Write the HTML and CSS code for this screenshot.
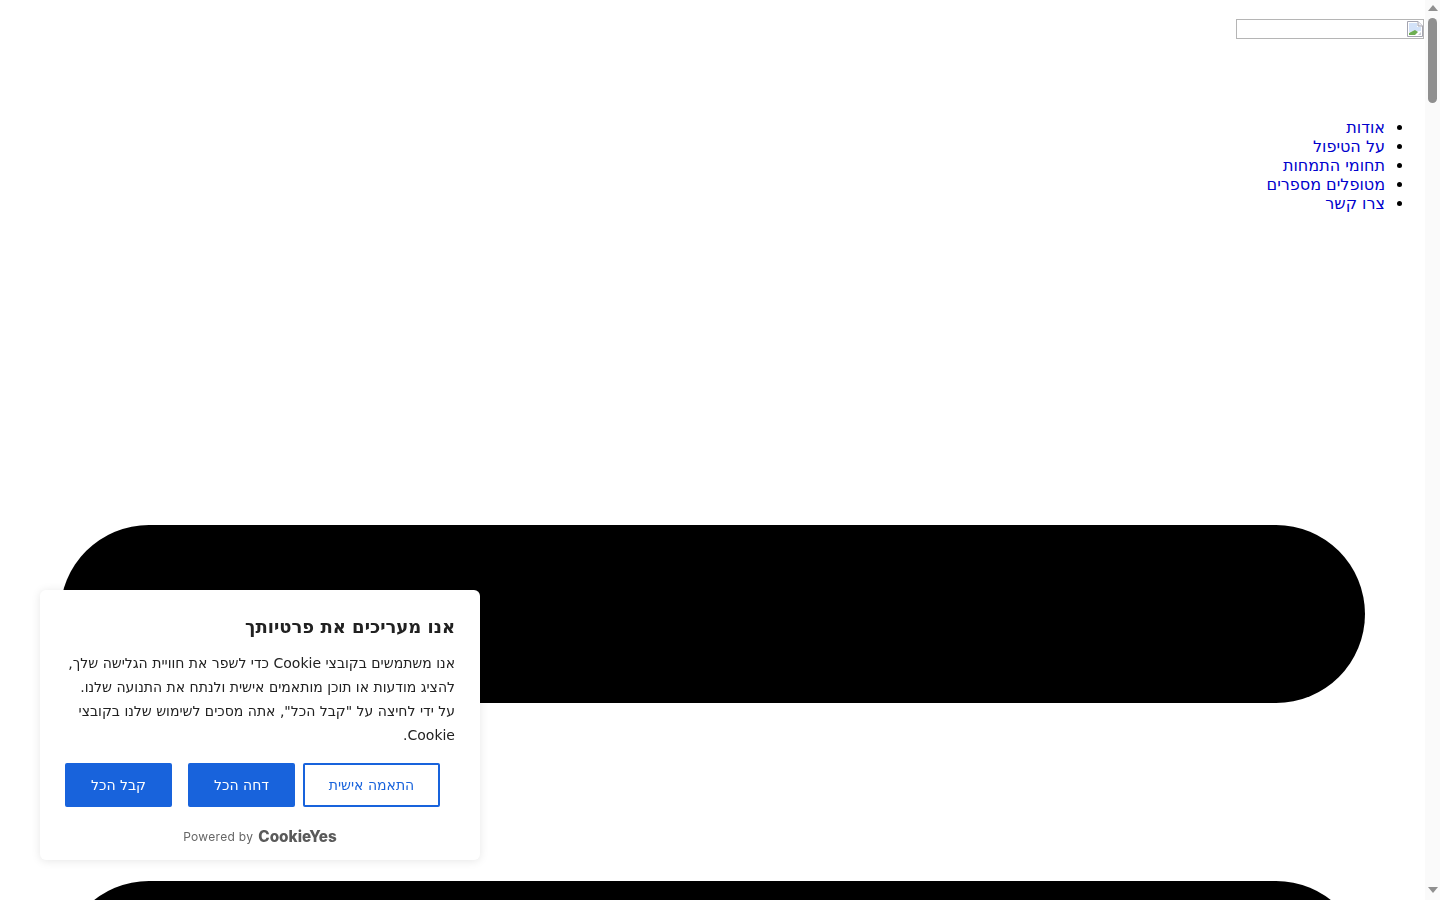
FILE: index.html
```html
<!DOCTYPE html>
<html lang="he" dir="rtl">

<head>
    <meta charset="utf-8">
    <title>אודות</title>
    <link rel="stylesheet" href="styles.css">
</head>

<body>
    <header class="site-header">
        <div class="logo-box">
            <svg class="broken-img" width="16" height="16" viewBox="0 0 16 16">
                <path d="M.5.500h10.500l4.500 4.500v10.500h-15z" fill="#fff" stroke="#a4a4b0" />
                <path d="M11 .5v4.500h4.500" fill="#eeeef3" stroke="#a4a4b0" />
                <path d="M2 2h8v4h4v4l-12 1z" fill="#d3e2f8" />
                <path d="M2 14v-2l6-3 3 2-3 3z" fill="#6cae52" />
                <path d="M11 14l3-3v3z" fill="#c8cdd6" />
            </svg>
        </div>
    </header>

    <nav>
        <ul class="main-menu">
            <li><a href="#">אודות</a></li>
            <li><a href="#">על הטיפול</a></li>
            <li><a href="#">תחומי התמחות</a></li>
            <li><a href="#">מטופלים מספרים</a></li>
            <li><a href="#">צרו קשר</a></li>
        </ul>
    </nav>

    <main class="sections">
        <div class="pill"></div>
        <div class="pill"></div>
    </main>

    <!-- COOKIE BANNER -->
    <div class="cookie-banner">
        <p class="cookie-title">אנו מעריכים את פרטיותך</p>
        <p class="cookie-text">אנו משתמשים בקובצי Cookie כדי לשפר את חוויית הגלישה שלך, להציג מודעות או תוכן מותאמים אישית ולנתח את התנועה שלנו. על ידי לחיצה על "קבל הכל", אתה מסכים לשימוש שלנו בקובצי Cookie.</p>
        <div class="cookie-buttons">
            <button class="btn btn-outline">התאמה אישית</button>
            <button class="btn btn-solid">דחה הכל</button>
            <button class="btn btn-solid">קבל הכל</button>
        </div>
        <div class="powered" dir="ltr">
            <span class="powered-label">Powered by</span>
            <span class="cy-logo">CookieYes</span>
        </div>
    </div>
    <!-- END COOKIE BANNER -->

    <!-- SCROLLBAR -->
    <div class="scrollbar" aria-hidden="true">
        <span class="arrow-up"></span>
        <span class="thumb"></span>
        <span class="arrow-down"></span>
    </div>
    <!-- END SCROLLBAR -->
</body>

</html>
```

FILE: styles.css
```css
html {
    overflow: hidden;
}

body {
    margin: 0;
    padding-right: 15px;
    font-family: "DejaVu Sans", sans-serif;
    font-size: 16px;
    line-height: 19px;
    color: #000;
    background-color: #fff;
}

.site-header {
    display: flex;
    height: 83px;
    padding: 19px 1px 0 0;
}

.logo-box {
    width: 186px;
    height: 18px;
    border: 1px solid #b5b5b5;
    display: flex;
}

.broken-img {
    display: block;
    margin-top: 1px;
}

.main-menu {
    margin: 16px 0;
    padding-right: 40px;
}

.main-menu a {
    color: #0000cc;
    text-decoration: none;
}

.sections {
    padding: 296px 60px 0;
}

.pill {
    height: 178px;
    margin-bottom: 178px;
    border-radius: 89px;
    background-color: #000;
}

.cookie-banner {
    position: fixed;
    left: 40px;
    bottom: 40px;
    width: 440px;
    height: 270px;
    box-sizing: border-box;
    padding: 25px 25px 0;
    background-color: #fff;
    border-radius: 6px;
    box-shadow: 0 1px 10px rgba(0, 0, 0, 0.1);
    color: #212121;
}

.cookie-title {
    margin: 0;
    font-size: 18px;
    line-height: 24px;
    font-weight: bold;
}

.cookie-text {
    margin: 12px 0 0;
    font-size: 14px;
    line-height: 24px;
}

.cookie-buttons {
    display: flex;
    margin-top: 16px;
    padding-right: 15px;
}

.btn {
    height: 44px;
    box-sizing: border-box;
    border-radius: 2px;
    border: 2px solid #1863dc;
    font-family: "DejaVu Sans", sans-serif;
    font-size: 14px;
}

.btn-outline {
    width: 137px;
    margin-left: 8px;
    background-color: #fff;
    color: #1863dc;
}

.btn-solid {
    width: 107px;
    margin-left: 16px;
    background-color: #1863dc;
    color: #fff;
}

.btn-solid:last-child {
    margin-left: 0;
}

.powered {
    display: flex;
    justify-content: center;
    align-items: center;
    gap: 5px;
    margin-top: 20px;
    line-height: 20px;
    color: #666;
}

.powered-label {
    font-family: "Inter", sans-serif;
    font-size: 12px;
    letter-spacing: 0.3px;
}

.cy-logo {
    font-family: "Inter", sans-serif;
    font-size: 15.3px;
    font-weight: 800;
    color: #5a5a5a;
}

.scrollbar {
    position: fixed;
    top: 0;
    right: 0;
    bottom: 0;
    width: 15px;
    display: flex;
    flex-direction: column;
    align-items: center;
    padding: 5px 0 7px;
    box-sizing: border-box;
    background-color: #fafafa;
}

.arrow-up {
    border-left: 5px solid transparent;
    border-right: 5px solid transparent;
    border-bottom: 6px solid #8f8f8f;
}

.thumb {
    width: 9px;
    height: 85px;
    margin-top: 7px;
    border-radius: 5px;
    background-color: #8f8f8f;
}

.arrow-down {
    margin-top: auto;
    border-left: 5px solid transparent;
    border-right: 5px solid transparent;
    border-top: 6px solid #8f8f8f;
}
```
